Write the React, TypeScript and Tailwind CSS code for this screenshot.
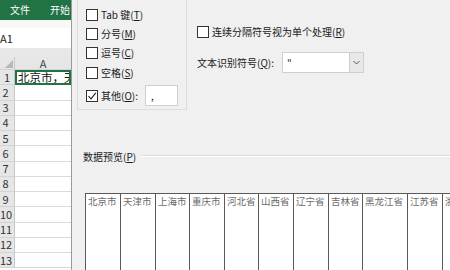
import React from "react";

const font = { fontFamily: '"Noto Sans CJK SC", "Noto Sans", sans-serif' };

function Box({ checked = false }: { checked?: boolean }) {
  return (
    <div className="w-[12px] h-[12px] border border-[#333] bg-white flex items-center justify-center shrink-0">
      {checked && (
        <svg width="10" height="10" viewBox="0 0 10 10">
          <path d="M1.5 5.2 L4 7.8 L8.8 1.8" fill="none" stroke="#222" strokeWidth="1.1" />
        </svg>
      )}
    </div>
  );
}

function Lbl({ pre, k, post = ")" }: { pre: string; k: string; post?: string }) {
  return (
    <span className="whitespace-nowrap">
      {pre}(<span className="underline underline-offset-1">{k}</span>{post}
    </span>
  );
}

const rows = [2, 3, 4, 5, 6, 7, 8, 9, 10, 11, 12, 13];
const cols: [string, number][] = [
  ["北京市", 35],
  ["天津市", 35],
  ["上海市", 34],
  ["重庆市", 35],
  ["河北省", 34],
  ["山西省", 35],
  ["辽宁省", 35],
  ["吉林省", 34],
  ["黑龙江省", 45],
  ["江苏省", 35],
  ["浙江省", 40],
];

export default function App() {
  return (
    <div className="w-[450px] h-[270px] overflow-hidden flex bg-[#f0f0f0]" style={font}>
      {/* Excel side */}
      <div className="w-[72px] shrink-0 flex flex-col bg-white border-r border-[#9a9a9a]">
        <div className="h-[20px] bg-[#217346] flex items-center text-white text-[10px] leading-none whitespace-nowrap overflow-hidden">
          <span className="ml-[10px] shrink-0">文件</span>
          <span className="ml-[20px] shrink-0">开始</span>
        </div>
        <div className="h-[8px] bg-[#f8f8f8]" />
        <div className="h-[20px] flex items-center text-[11px] text-[#222] bg-white">
          <span>A1</span>
        </div>
        <div className="h-[9px] bg-[#e8e8e8]" />
        <div className="h-[13px] flex bg-[#e6e6e6] border-b border-[#d4d4d4]">
          <div className="w-[15px] border-r border-[#c8c8c8] relative">
            <svg className="absolute right-[1px] bottom-[1px]" width="8" height="8" viewBox="0 0 8 8">
              <path d="M8 0 L8 8 L0 8 Z" fill="#b8b8b8" />
            </svg>
          </div>
          <div className="flex-1 flex items-center justify-center text-[11px] text-[#444] leading-none">A</div>
        </div>
        <div className="h-[15.25px] flex">
          <div className="w-[15px] bg-[#e6e6e6] border-r border-[#c8c8c8] border-b border-b-[#d4d4d4] flex items-center justify-center text-[11px] text-[#333] leading-none">
            <span className="w-[11px] text-center">1</span>
          </div>
          <div className="flex-1 border-2 border-[#217346] flex items-center text-[11.5px] text-[#111] whitespace-nowrap overflow-hidden leading-none pl-[1px]">
            北京市，天
          </div>
        </div>
        {rows.map((r) => (
          <div key={r} className="h-[15.25px] flex shrink-0">
            <div className="w-[15px] bg-[#e6e6e6] border-r border-[#c8c8c8] border-b border-b-[#d4d4d4] flex items-center text-[11px] text-[#333] leading-none overflow-hidden">
              <span className="w-[11px] text-center whitespace-nowrap">{r}</span>
            </div>
            <div className="flex-1 border-b border-[#dadada]" />
          </div>
        ))}
      </div>

      {/* Dialog side */}
      <div className="flex-1 flex flex-col text-[10px] text-[#1a1a1a] leading-none">
        <div className="flex h-[118px] shrink-0">
          <div className="ml-[5px] w-[110px] h-[110px] border-l border-r border-b border-[#dcdcdc] flex flex-col pl-[8px]">
            <div className="flex items-center gap-[3px] mt-[9px] h-[12px]">
              <Box />
              <span className="whitespace-nowrap">
                Tab 键(<span className="underline underline-offset-1">T</span>)
              </span>
            </div>
            <div className="flex items-center gap-[3px] mt-[7px] h-[12px]">
              <Box />
              <Lbl pre="分号" k="M" />
            </div>
            <div className="flex items-center gap-[3px] mt-[7px] h-[12px]">
              <Box />
              <Lbl pre="逗号" k="C" />
            </div>
            <div className="flex items-center gap-[3px] mt-[8px] h-[12px]">
              <Box />
              <Lbl pre="空格" k="S" />
            </div>
            <div className="flex items-center mt-[6px] h-[21px]">
              <Box checked />
              <span className="ml-[3px]">
                <Lbl pre="其他" k="O" post="):" />
              </span>
              <div className="ml-[7px] w-[33px] h-[21px] bg-white border border-[#cfcfcf] flex items-center pl-[5px] text-[10px]">
                ,
              </div>
            </div>
          </div>
          <div className="ml-[10px] flex flex-col">
            <div className="flex items-center gap-[3px] mt-[26px] h-[12px]">
              <Box />
              <Lbl pre="连续分隔符号视为单个处理" k="R" />
            </div>
            <div className="flex items-center mt-[14px]">
              <Lbl pre="文本识别符号" k="Q" post="):" />
              <div className="ml-[8px] w-[82px] h-[21px] bg-white border border-[#cfcfcf] flex">
                <div className="flex-1 pl-[4px] pt-[5px] text-[10px]">"</div>
                <div className="w-[14px] bg-[#e8e8e8] border-l border-[#cfcfcf] flex items-center justify-center">
                  <svg width="7" height="5" viewBox="0 0 7 5">
                    <path d="M0.5 1 L3.5 4 L6.5 1" fill="none" stroke="#555" strokeWidth="1" />
                  </svg>
                </div>
              </div>
            </div>
          </div>
        </div>

        <div className="flex items-center mt-[33px] ml-[11px] h-[12px] shrink-0">
          <Lbl pre="数据预览" k="P" />
          <div className="flex-1 ml-[5px] h-[2px] border-t border-[#dcdcdc] border-b border-b-white mt-[-3px]" />
        </div>

        <div className="ml-[13px] mt-[30px] flex-1 bg-white border-t border-[#5a5a5a] flex border-l border-l-[#5a5a5a]">
          {cols.map(([name, w]) => (
            <div
              key={name}
              className="shrink-0 border-r border-[#5a5a5a] text-[9.5px] text-[#6a6a6a] pl-[2px] pt-[3px] whitespace-nowrap overflow-hidden"
              style={{ width: w }}
            >
              {name}
            </div>
          ))}
        </div>
      </div>
    </div>
  );
}
